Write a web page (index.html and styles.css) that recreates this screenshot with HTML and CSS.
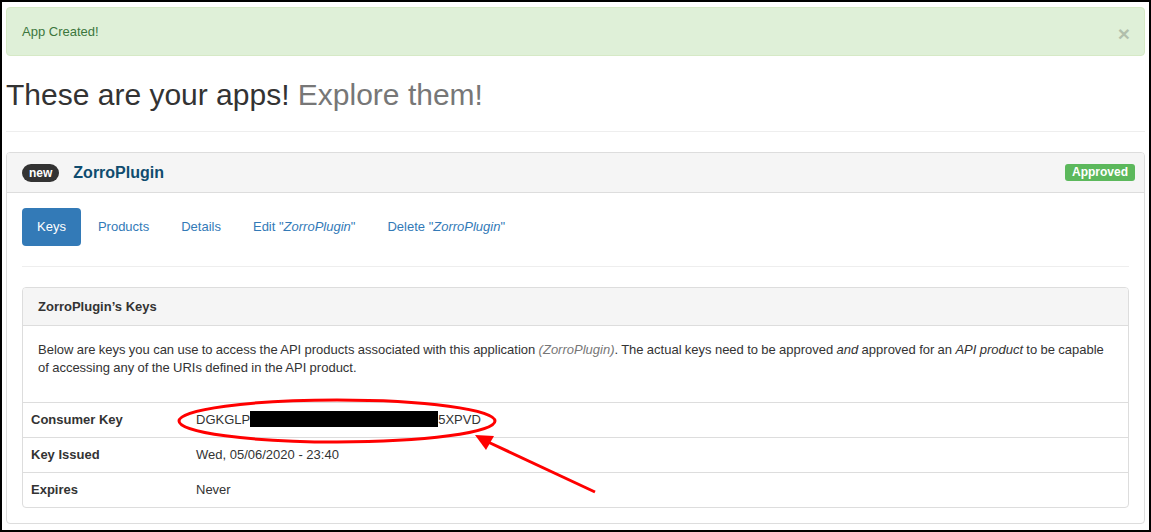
FILE: index.html
```html
<!DOCTYPE html>
<html lang="en">
<head>
<meta charset="utf-8">
<title>My apps</title>
<link rel="stylesheet" href="styles.css">
</head>
<body>
<div class="frame">
  <div class="page">
    <div class="alert">
      <span>App Created!</span>
      <span class="close">×</span>
    </div>
    <h1 class="title">These are your apps! <small>Explore them!</small></h1>
    <hr class="rule">
    <div class="panel app">
      <div class="panel-heading app-head">
        <span class="badge">new</span>
        <span class="app-name">ZorroPlugin</span>
        <span class="status">Approved</span>
      </div>
      <div class="panel-body">
        <ul class="pills">
          <li><a class="active">Keys</a></li>
          <li><a>Products</a></li>
          <li><a>Details</a></li>
          <li><a>Edit "<em>ZorroPlugin</em>"</a></li>
          <li><a>Delete "<em>ZorroPlugin</em>"</a></li>
        </ul>
        <hr class="rule">
        <div class="panel keys">
          <div class="panel-heading keys-head">ZorroPlugin’s Keys</div>
          <div class="panel-body">
            <p class="intro">Below are keys you can use to access the API products associated with this application <em class="muted">(ZorroPlugin)</em>. The actual keys need to be approved <em>and</em> approved for an <em>API product</em> to be capable of accessing any of the URIs defined in the API product.</p>
          </div>
          <table class="key-table">
            <tr><th>Consumer Key</th><td>DGKGLP<span class="redact"></span>5XPVD</td></tr>
            <tr><th>Key Issued</th><td>Wed, 05/06/2020 - 23:40</td></tr>
            <tr><th>Expires</th><td>Never</td></tr>
          </table>
        </div>
      </div>
    </div>
  </div>
  <svg class="annot" width="1151" height="532" viewBox="0 0 1151 532">
    <ellipse cx="337" cy="421" rx="158" ry="21" fill="none" stroke="#ff0000" stroke-width="3"/>
    <line x1="595" y1="492" x2="488" y2="442" stroke="#ff0000" stroke-width="3"/>
    <polygon points="475,435 494,436 486,450" fill="#ff0000"/>
  </svg>
</div>
</body>
</html>
```

FILE: styles.css
```css
* { box-sizing: border-box; }
html, body { margin: 0; padding: 0; background: #fff; }
body {
  font-family: "Liberation Sans", Arial, Helvetica, sans-serif;
  font-size: 13px;
  line-height: 18px;
  color: #333;
}
.frame {
  position: relative;
  width: 1151px;
  height: 532px;
  border: 2px solid #000;
  overflow: hidden;
  background: #fff;
}
.page {
  padding: 5px 4px 0 4px;
}
.alert {
  display: flex;
  justify-content: space-between;
  align-items: center;
  height: 49px;
  padding: 0 15px;
  background: #dff0d8;
  border: 1px solid #d6e9c6;
  border-radius: 4px;
  color: #3c763d;
}
.close {
  font-size: 21px;
  font-weight: bold;
  color: #000;
  opacity: 0.2;
  line-height: 1;
  margin-top: 3px;
  margin-right: -1px;
}
.title {
  margin: 22px 0 0 0;
  font-size: 30px;
  line-height: 33px;
  font-weight: normal;
  color: #333;
}
.title small {
  font-size: 30px;
  color: #777;
}
.rule {
  margin: 20px 0;
  border: 0;
  border-top: 1px solid #eee;
  height: 0;
}
.panel {
  border: 1px solid #ddd;
  border-radius: 4px;
  background: #fff;
  overflow: hidden;
}
.panel-heading {
  background: #f5f5f5;
  border-bottom: 1px solid #ddd;
}
.app-head {
  display: flex;
  align-items: center;
  height: 40px;
  padding: 0 9px 0 15px;
}
.badge {
  display: inline-block;
  background: #333;
  color: #fff;
  font-size: 12px;
  font-weight: bold;
  line-height: 14px;
  padding: 2px 7px;
  border-radius: 9px;
  margin-right: 14px;
}
.app-name {
  font-size: 16px;
  font-weight: bold;
  color: #0f4c6f;
  flex: 1;
}
.status {
  display: inline-block;
  background: #5cb85c;
  color: #fff;
  font-size: 12px;
  font-weight: bold;
  line-height: 13px;
  padding: 2px 7px;
  border-radius: 3px;
}
.panel-body {
  padding: 15px;
}
.pills {
  display: flex;
  list-style: none;
  margin: 0;
  padding: 0;
}
.pills li + li { margin-left: 2px; }
.pills a {
  display: block;
  padding: 10px 15px;
  line-height: 18px;
  color: #337ab7;
  border-radius: 4px;
  cursor: pointer;
}
.pills a.active {
  background: #337ab7;
  color: #fff;
}
.keys-head {
  height: 38px;
  padding: 10px 15px;
  font-weight: bold;
}
.intro {
  margin: 0 0 10px 0;
  word-spacing: -0.3px;
}
.muted { color: #777; }
.key-table {
  width: 100%;
  border-collapse: collapse;
  border-top: 1px solid #ddd;
}
.key-table th,
.key-table td {
  padding: 8px;
  line-height: 18px;
  border-top: 1px solid #ddd;
  text-align: left;
  vertical-align: top;
}
.key-table th {
  width: 165px;
  font-weight: bold;
}
.redact {
  display: inline-block;
  width: 188px;
  height: 16px;
  background: #000;
  vertical-align: -3px;
}
.annot {
  position: absolute;
  left: -2px;
  top: -2px;
  pointer-events: none;
}
```
